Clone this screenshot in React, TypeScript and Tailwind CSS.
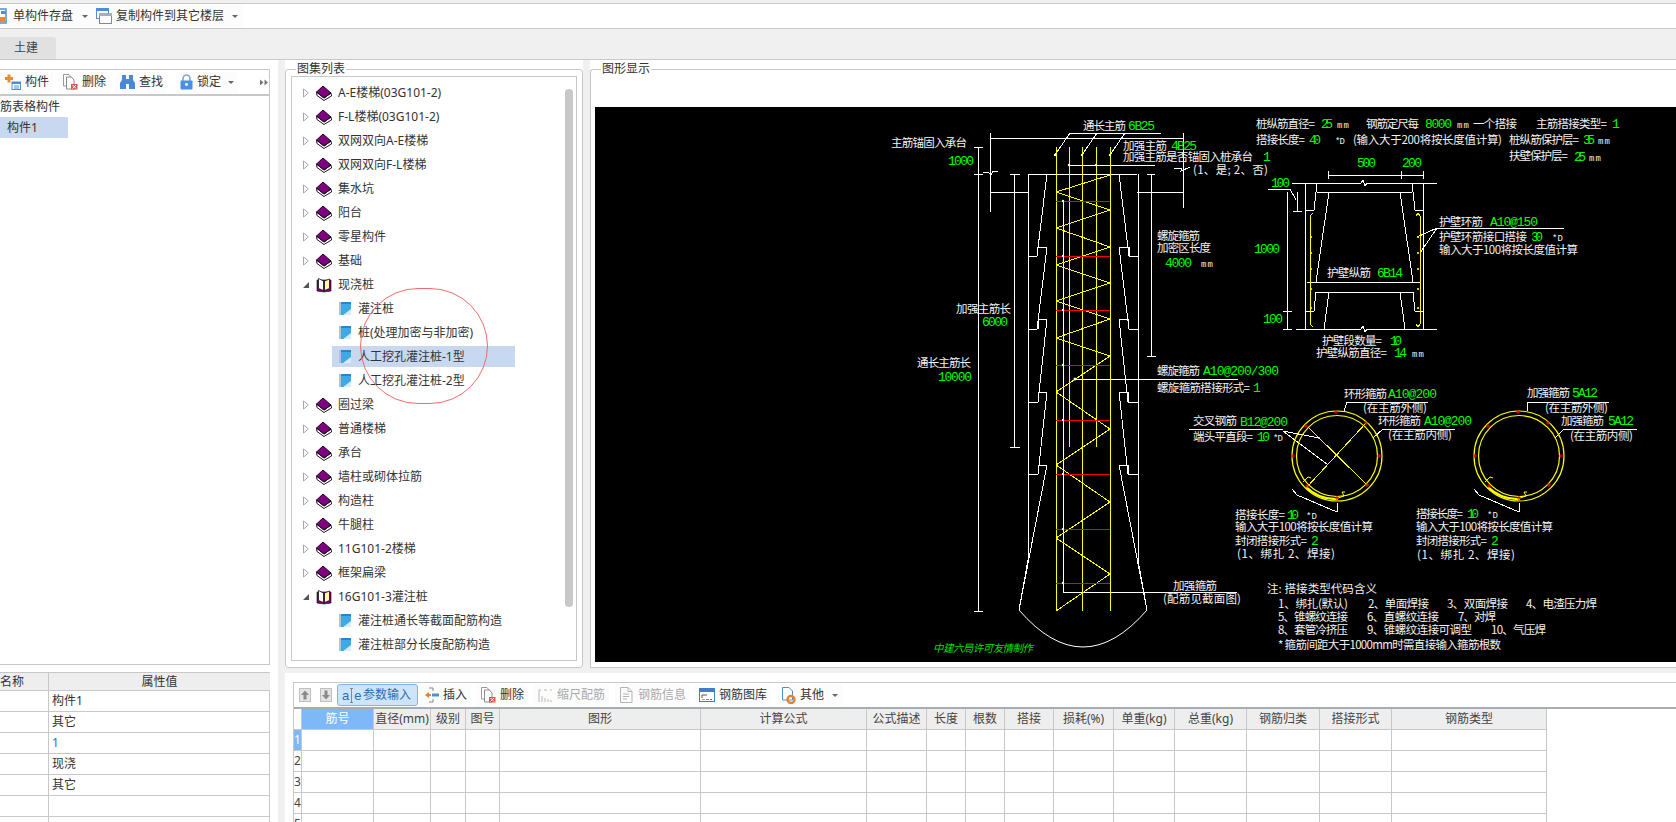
import type { ReactNode } from "react";

const sans = "font-['Noto_Sans','Noto_Sans_CJK_SC',sans-serif]";

type TreeItem = { label: string; open?: boolean; child?: boolean; selected?: boolean };

const tree: TreeItem[] = [
  { label: "A-E楼梯(03G101-2)" },
  { label: "F-L楼梯(03G101-2)" },
  { label: "双网双向A-E楼梯" },
  { label: "双网双向F-L楼梯" },
  { label: "集水坑" },
  { label: "阳台" },
  { label: "零星构件" },
  { label: "基础" },
  { label: "现浇桩", open: true },
  { label: "灌注桩", child: true },
  { label: "桩(处理加密与非加密)", child: true },
  { label: "人工挖孔灌注桩-1型", child: true, selected: true },
  { label: "人工挖孔灌注桩-2型", child: true },
  { label: "圈过梁" },
  { label: "普通楼梯" },
  { label: "承台" },
  { label: "墙柱或砌体拉筋" },
  { label: "构造柱" },
  { label: "牛腿柱" },
  { label: "11G101-2楼梯" },
  { label: "框架扁梁" },
  { label: "16G101-3灌注桩", open: true },
  { label: "灌注桩通长等截面配筋构造", child: true },
  { label: "灌注桩部分长度配筋构造", child: true },
];

const columns = ["筋号", "直径(mm)", "级别", "图号", "图形", "计算公式", "公式描述", "长度", "根数", "搭接", "损耗(%)", "单重(kg)", "总重(kg)", "钢筋归类", "搭接形式", "钢筋类型"];

const props = ["构件1", "其它", "1", "现浇", "其它", "", ""];

// cad text: x, centre y, width, text
type Label = [number, number, number, string];

const whiteLabels: Label[] = [
  [1083, 126, 43, "通长主筋"], [891, 143, 76, "主筋锚固入承台"], [1123, 146, 44, "加强主筋"], [1123, 157, 130, "加强主筋是否锚固入桩承台"],
  [1193, 170, 75, "(1、是; 2、否)"], [1157, 236, 43, "螺旋箍筋"], [1157, 248, 54, "加密区长度"], [956, 309, 55, "加强主筋长"], [917, 363, 54, "通长主筋长"],
  [1157, 371, 43, "螺旋箍筋"], [1157, 388, 93, "螺旋箍筋搭接形式="], [1193, 421, 44, "交叉钢筋"], [1193, 437, 60, "端头平直段="],
  [1173, 586, 44, "加强箍筋"], [1163, 599, 78, "(配筋见截面图)"],
  [1256, 124, 59, "桩纵筋直径="], [1366, 124, 53, "钢筋定尺每"], [1473, 124, 44, "一个搭接"], [1536, 124, 71, "主筋搭接类型="],
  [1256, 140, 49, "搭接长度="], [1353, 140, 149, "(输入大于200将按长度值计算)"], [1509, 140, 70, "桩纵筋保护层="], [1509, 156, 59, "扶壁保护层="],
  [1439, 222, 44, "护壁环筋"], [1439, 237, 88, "护壁环筋接口搭接"], [1439, 250, 139, "输入大于100将按长度值计算"], [1327, 273, 44, "护壁纵筋"],
  [1322, 341, 60, "护壁段数量="], [1316, 353, 71, "护壁纵筋直径="],
  [1344, 394, 43, "环形箍筋"], [1363, 408, 64, "(在主筋外侧)"], [1378, 421, 43, "环形箍筋"], [1388, 435, 64, "(在主筋内侧)"],
  [1235, 515, 50, "搭接长度="], [1235, 527, 138, "输入大于100将按长度值计算"], [1235, 541, 72, "封闭搭接形式="], [1237, 554, 98, "(1、绑扎  2、焊接)"],
  [1527, 393, 43, "加强箍筋"], [1545, 408, 63, "(在主筋外侧)"], [1561, 421, 43, "加强箍筋"], [1570, 436, 63, "(在主筋内侧)"],
  [1416, 514, 47, "搭接长度="], [1416, 527, 137, "输入大于100将按长度值计算"], [1416, 541, 71, "封闭搭接形式="], [1417, 555, 98, "(1、绑扎  2、焊接)"],
  [1267, 589, 110, "注: 搭接类型代码含义"],
  [1278, 604, 70, "1、绑扎(默认)"], [1368, 604, 61, "2、单面焊接"], [1447, 604, 61, "3、双面焊接"], [1526, 604, 71, "4、电渣压力焊"],
  [1278, 617, 70, "5、锥螺纹连接"], [1367, 617, 72, "6、直螺纹连接"], [1458, 617, 38, "7、对焊"],
  [1278, 630, 70, "8、套管冷挤压"], [1367, 630, 105, "9、锥螺纹连接可调型"], [1491, 630, 55, "10、气压焊"],
  [1278, 645, 223, "* 箍筋间距大于1000mm时需直接输入箍筋根数"],
];

const greenLabels: Label[] = [
  [1128, 126, 27, "6B25"], [948, 161, 26, "1000"], [1171, 146, 26, "4B25"], [1263, 157, 8, "1"], [1165, 263, 27, "4000"], [982, 322, 26, "6000"],
  [938, 377, 34, "10000"], [1203, 371, 76, "A10@200/300"], [1253, 388, 8, "1"], [1240, 422, 48, "B12@200"], [1257, 437, 13, "10"],
  [1321, 124, 12, "25"], [1425, 124, 27, "8000"], [1612, 124, 8, "1"], [1309, 140, 12, "40"], [1583, 140, 12, "35"], [1574, 157, 12, "25"],
  [1357, 163, 19, "500"], [1402, 163, 20, "200"], [1271, 183, 19, "100"], [1254, 249, 26, "1000"], [1263, 319, 20, "100"],
  [1490, 222, 48, "A10@150"], [1531, 237, 12, "30"], [1377, 273, 26, "6B14"], [1390, 341, 12, "10"], [1394, 353, 13, "14"],
  [1388, 394, 49, "A10@200"], [1424, 421, 48, "A10@200"], [1287, 515, 12, "10"], [1311, 541, 7, "2"],
  [1572, 393, 26, "5A12"], [1608, 421, 26, "5A12"], [1467, 514, 12, "10"], [1491, 541, 7, "2"],
];

const unitLabels: Label[] = [
  [1201, 263, 12, "mm"], [1337, 124, 12, "mm"], [1457, 124, 12, "mm"], [1598, 140, 12, "mm"], [1589, 157, 12, "mm"], [1412, 353, 12, "mm"],
  [1335, 140, 10, "*D"], [1552, 237, 11, "*D"], [1273, 437, 10, "*D"], [1306, 515, 11, "*D"], [1487, 514, 11, "*D"],
];

const wallLines = [
  "1047,174 1037,256 1028,256",
  "1037,256 1037,247 1047,247 1037,329 1028,329",
  "1038,329 1038,319 1047,319 1038,402 1028,402",
  "1038,402 1038,392 1047,392 1038,474 1028,474",
  "1038,474 1038,465 1047,465 1019,610",
  "1028,174 1028,560 1019,610",
];

const whiteLines = [
  "990,133 990,212", "990,138 1183,138", "1183,133 1183,208", "1070,133 1161,133", "1070,133 1055,155", "1097,133 1082,155", "1125,133 1110,155", "1068,165 1155,165",
  "978,147 978,611", "974,147 983,147", "974,174 983,174", "974,611 983,611", "1014,174 1014,447", "1010,174 1020,174", "1010,447 1020,447",
  "1028,174 1137,174", "990,192 1028,192", "1137,192 1183,192", "983,173 988,172 991,175 993,171 998,171", "1174,168 1182,168 1181,171 1190,167",
  "1151,174 1151,356", "1147,174 1155,174", "1147,356 1156,356", "1063,200 1063,592 1237,592", "1075,379 1238,379",
  // wall section
  "1328,175 1423,175", "1328,171 1328,179", "1401,171 1401,179", "1423,171 1423,179", "1292,183 1361,183 1363,180 1365,186 1367,183 1437,183", "1317,192 1412,192",
  "1305,183 1305,329", "1423,183 1423,329", "1317,183 1314,210 1305,210", "1412,183 1415,210 1423,210", "1329,192 1316,282", "1400,192 1413,282", "1307,282 1420,282",
  "1316,292 1413,292", "1316,292 1314,311 1305,311", "1413,292 1415,311 1423,311", "1329,292 1324,329", "1400,292 1405,329",
  "1296,329 1361,329 1363,326 1365,332 1367,329 1437,329", "1287,192 1287,329", "1283,311 1292,311", "1283,329 1292,329", "1297,192 1297,211", "1293,211 1302,211", "1268,189 1290,189 1296,200",
  "1437,228 1564,228", "1437,228 1417,237", "1437,228 1420,253",
  // ring leaders
  "1344,411 1347,402 1428,402", "1373,438 1383,429 1455,429", "1189,429 1283,429", "1283,431 1319,438", "1283,431 1327,464", "1292,489 1297,495 1337,512 1338,503",
  "1527,411 1528,402 1609,402", "1555,438 1564,429 1637,429", "1474,489 1479,495 1519,512 1520,503",
];

const yellowLines = [
  "1056,147 1056,611", "1069,147 1069,447", "1082,147 1082,611", "1096,147 1096,447", "1110,147 1110,611",
  "1110,175 1056,192 1110,210 1056,228 1110,247 1056,265 1110,283 1056,301 1110,319 1056,338 1110,356 1056,392 1110,429 1056,465 1110,502 1056,538 1110,574 1056,611",
  "1313,213 1310,216 1310,324 1313,327", "1416,216 1418,213 1420,216 1420,324 1418,327 1416,324",
  "1308,427 1367,485", "1366,423 1307,487",
];

const redY = [201, 256, 310, 365, 420, 474, 529, 583];
const ringMarks: [number, number][] = [[1336, 412], [1306, 426], [1293, 456], [1379, 456], [1366, 423], [1307, 486], [1337, 498], [1367, 485]];

function BookIcon() {
  return (
    <svg width="16" height="16" viewBox="0 0 16 16" className="shrink-0">
      <path d="M0.5 7 L1 10.5 L8 15.5 L15.5 11 L15 8 L8 13 Z" fill="#fff" stroke="#000" strokeWidth="0.9" />
      <path d="M0.5 7 L7 1 L15 8 L8 13 Z" fill="#800080" stroke="#000" strokeWidth="0.9" />
    </svg>
  );
}

function OpenBookIcon() {
  return (
    <svg width="16" height="16" viewBox="0 0 16 16" className="shrink-0">
      <path d="M1 3 L1 14 L8 15 L15 14 L15 3 Z" fill="#800080" stroke="#000" strokeWidth="0.6" />
      <path d="M2.5 1.5 L7.5 4 L7.5 13.5 L2.5 11.5 Z" fill="#fff" stroke="#000" strokeWidth="0.7" />
      <path d="M13.5 2 L8.5 4 L8.5 13.5 L13.5 11.5 Z" fill="#fff8b0" stroke="#000" strokeWidth="0.7" />
    </svg>
  );
}

function PageIcon() {
  return (
    <svg width="14" height="15" viewBox="0 0 14 15" className="shrink-0">
      <rect x="1" y="1" width="12" height="13" fill="#3fa9e6" />
      <rect x="1" y="1" width="2" height="13" fill="#b0c4d4" />
      <rect x="3" y="1" width="10" height="2" fill="#2a86c8" />
      <path d="M13 8 L13 14 L5 14 Z" fill="#d5ecf8" />
    </svg>
  );
}

function Arrow({ open }: { open?: boolean }) {
  return open ? (
    <svg width="8" height="8" viewBox="0 0 8 8" className="shrink-0">
      <path d="M7 1 L7 7 L1 7 Z" fill="#555" />
    </svg>
  ) : (
    <svg width="8" height="10" viewBox="0 0 8 10" className="shrink-0">
      <path d="M1.5 1 L6.5 5 L1.5 9 Z" fill="#fff" stroke="#a6a6a6" />
    </svg>
  );
}

function Caret({ className }: { className: string }) {
  return <span className={`h-0 w-0 border-x-[3px] border-t-[3px] border-x-transparent border-t-[#666] ${className}`} />;
}

function DeleteIcon() {
  return (
    <svg width="16" height="16" viewBox="0 0 16 16" className="shrink-0">
      <path d="M1.5 0.5 H7 L9 3 V12 H1.5 Z" fill="#fff" stroke="#9a9a9a" />
      <path d="M4.5 3 H9.5 L12 6 V15 H4.5 Z" fill="#fff" stroke="#8a8a8a" />
      <rect x="9" y="10" width="6.5" height="5.5" fill="#d9534f" />
      <path d="M10.5 11 L14 14.5 M14 11 L10.5 14.5" stroke="#fff" />
    </svg>
  );
}

function Tool({ icon, label, caret, disabled, className = "" }: { icon: ReactNode; label: string; caret?: string; disabled?: boolean; className?: string }) {
  return (
    <div className={`flex h-[22px] shrink-0 items-center gap-[4px] rounded-[2px] bg-[#fcfcfc] px-[4px] leading-none ${disabled ? "text-[#aaaaaa]" : "text-[#333333]"} ${className}`}>
      {icon}
      <span>{label}</span>
      {caret && <Caret className={caret} />}
    </div>
  );
}

function TopToolbar() {
  return (
    <div className="flex h-[26px] items-center overflow-hidden border-y border-[#c8c8c8] bg-white">
      <Tool
        className="-ml-[13px]"
        label="单构件存盘"
        caret="ml-[5px]"
        icon={
          <svg width="18" height="16" viewBox="0 0 18 16" className="shrink-0">
            <rect x="1" y="1" width="14" height="14" fill="#fff" stroke="#4a90d9" strokeWidth="1.5" />
            <rect x="8" y="9" width="6" height="5" fill="#e88b2e" />
            <rect x="10" y="3" width="5" height="3" fill="#4a90d9" />
          </svg>
        }
      />
      <Tool
        label="复制构件到其它楼层"
        caret="ml-[4px]"
        icon={
          <svg width="16" height="16" viewBox="0 0 16 16" className="shrink-0">
            <rect x="0.5" y="0.5" width="12" height="10" fill="#fff" stroke="#4a90d9" />
            <rect x="0" y="0" width="13" height="3" fill="#4a90d9" />
            <rect x="3.5" y="5.5" width="12" height="10" fill="#fff" stroke="#808890" />
            <rect x="3" y="5" width="13" height="3" fill="#a8aeb4" />
          </svg>
        }
      />
    </div>
  );
}

function LeftColumn() {
  return (
    <div className="flex w-[278px] shrink-0 flex-col bg-white">
      <div className="mt-[9px] h-[596px] w-[270px] shrink-0 border-y border-r border-[#c8c8c8]">
        <div className="flex h-[26px] items-center border-b-2 border-[#c8c8c8]">
          <Tool
            className="ml-[1px]"
            label="构件"
            icon={
              <svg width="16" height="16" viewBox="0 0 16 16" className="shrink-0">
                <path d="M2.5 0.5 H5.5 V3 H8 V6 H5.5 V8.5 H2.5 V6 H0 V3 H2.5 Z" fill="#ee8a2c" />
                <rect x="7" y="8" width="8.5" height="7.5" fill="#fff" stroke="#4a90d9" />
                <rect x="7" y="8" width="8.5" height="2" fill="#4a90d9" />
                <path d="M9 12 H14 M9 14 H14" stroke="#4a90d9" />
              </svg>
            }
          />
          <Tool className="ml-[5px]" label="删除" icon={<DeleteIcon />} />
          <Tool
            className="ml-[6px]"
            label="查找"
            icon={
              <svg width="15" height="16" viewBox="0 0 15 16" className="shrink-0">
                <path d="M2 1 H6 V5 H9 V1 H13 V6 L15 9 V15 H9 V10 H6 V15 H0 V9 L2 6 Z" fill="#4a8ad4" />
              </svg>
            }
          />
          <Tool
            className="ml-[9px]"
            label="锁定"
            caret="ml-[3px]"
            icon={
              <svg width="13" height="16" viewBox="0 0 13 16" className="shrink-0">
                <path d="M3 7 V4.5 A3.5 3.5 0 0 1 10 4.5 V7" fill="none" stroke="#7aa8d8" strokeWidth="1.6" />
                <rect x="0.5" y="6.5" width="12" height="9" rx="1" fill="#4a90e0" />
                <circle cx="6.5" cy="10.5" r="1.4" fill="#fff" />
              </svg>
            }
          />
          <svg width="8" height="7" viewBox="0 0 8 7" className="ml-[22px] shrink-0">
            <path d="M0 0.5 L3.5 3.5 L0 6.5 Z M4.5 0.5 L8 3.5 L4.5 6.5 Z" fill="#777777" />
          </svg>
        </div>
        <div className="flex h-[21px] items-center leading-none text-[#333333]">筋表格构件</div>
        <div className="flex h-[21px] w-[68px] items-center bg-[#c7d8f0] pl-[7px] leading-none text-[#333333]">构件1</div>
      </div>
      <div className="mt-[7px] grid w-[270px] shrink-0 grid-cols-[49px_221px] border-t border-r border-[#c8c8c8] leading-none text-[#333333]">
        <div className="flex h-[18px] items-center border-r border-b border-[#c8c8c8] bg-[#eeeeee]">名称</div>
        <div className="flex h-[18px] items-center justify-center border-b border-[#c8c8c8] bg-[#eeeeee]">属性值</div>
        {props.map((value, i) => (
          <div key={i} className="contents">
            <div className="h-[21px] border-r border-b border-[#c8c8c8]" />
            <div className={`flex h-[21px] items-center border-b border-[#c8c8c8] pl-[3px] ${value === "1" ? "text-[#2a6fb5]" : ""}`}>{value}</div>
          </div>
        ))}
      </div>
    </div>
  );
}

function TreeRow({ item }: { item: TreeItem }) {
  if (item.child) {
    return (
      <div className={`ml-[40px] flex h-[21px] w-[183px] items-center gap-[6px] pl-[6px] ${item.selected ? "bg-[#c7d8f0]" : ""}`}>
        <PageIcon />
        <span>{item.label}</span>
      </div>
    );
  }
  return (
    <div className="flex h-[21px] items-center pl-[10px]">
      <span className="flex w-[14px] shrink-0 items-center">
        <Arrow open={item.open} />
      </span>
      <span className="mr-[6px]">{item.open ? <OpenBookIcon /> : <BookIcon />}</span>
      <span>{item.label}</span>
    </div>
  );
}

function AtlasPanel() {
  return (
    <div className="w-[298px] shrink-0 bg-white pt-[9px]">
      <div className="relative h-[599px] rounded-[3px] border border-[#c8c8c8] px-[5px] pt-[6px] pb-[6px]">
        <span className="absolute -top-[8px] left-[10px] bg-white px-px leading-[14px] text-[#333333]">图集列表</span>
        <div className="relative flex h-full border border-[#c8c8c8] bg-white">
          <div className="flex flex-1 flex-col gap-[3px] pt-[5px] leading-none text-[#333333]">
            {tree.map((item) => (
              <TreeRow key={item.label} item={item} />
            ))}
          </div>
          <div className="mt-[12px] mr-[3px] h-[518px] w-[8px] rounded-[4px] bg-[#c8c8c8]" />
          <div className="absolute top-[211px] left-[68px] h-[116px] w-[128px] rounded-full border border-[#f26a6e]" />
        </div>
      </div>
    </div>
  );
}

function CadLabel({ label, className }: { label: Label; className: string }) {
  return (
    <text x={label[0]} y={label[1] + 4} textLength={label[2]} lengthAdjust="spacing" className={className}>
      {label[3]}
    </text>
  );
}

function Ring({ dx, cross }: { dx: number; cross?: boolean }) {
  return (
    <g transform={`translate(${dx} 0)`} fill="none">
      <circle cx="1337" cy="456" r="45" stroke="#ffff00" strokeWidth="1.2" />
      <circle cx="1337" cy="456" r="40.5" stroke="#ffff00" strokeWidth="1.2" />
      <path d="M1306 487 A43 43 0 0 0 1338 499" stroke="#ffff00" strokeWidth="2.2" />
      <path d="M1303 482 l5 -5 l3 1 M1338 498 l6 -2 l-2 -4 l3 0" stroke="#ffff00" />
      {ringMarks.map(([x, y]) => (
        <path key={`${x}-${y}`} d={`M${x - 2} ${y} h4 M${x} ${y - 2} v4`} stroke="#ff0000" />
      ))}
      {cross && <circle cx="1319" cy="438" r="1" fill="#fff" />}
    </g>
  );
}

function Drawing() {
  return (
    <svg width="1081" height="555" viewBox="595 107 1081 555" className="block">
      <g fill="none" stroke="#ffffff" shapeRendering="crispEdges">
        {whiteLines.map((p) => (
          <polyline key={p} points={p} />
        ))}
        {wallLines.map((p) => (
          <polyline key={p} points={p} />
        ))}
        <g transform="translate(2166 0) scale(-1 1)">
          {wallLines.map((p) => (
            <polyline key={p} points={p} />
          ))}
        </g>
        <path d="M1019 610 Q1083 684 1147 610" shapeRendering="auto" />
      </g>
      <g fill="none" stroke="#ffff00" shapeRendering="crispEdges">
        {yellowLines.map((p) => (
          <polyline key={p} points={p} />
        ))}
      </g>
      <g stroke="#ff0000" shapeRendering="crispEdges">
        {redY.map((y) => (
          <line key={y} x1="1056" y1={y} x2="1110" y2={y} />
        ))}
      </g>
      <g fill="#ffffff">
        {redY.map((y) => (
          <circle key={y} cx="1063" cy={y} r="1.2" />
        ))}
        {[1055, 1082, 1110, 1069, 1096].map((x) => (
          <circle key={x} cx={x} cy={x === 1069 || x === 1096 ? 165 : 155} r="1.2" />
        ))}
        <circle cx="1075" cy="379" r="1.5" />
      </g>
      <g fill="#ffff00">
        {[1310, 1420].flatMap((x) =>
          [237, 253, 269, 289, 308].map((y) => <circle key={`${x}-${y}`} cx={x + (x === 1310 ? 1 : -2)} cy={y} r="1.1" />),
        )}
      </g>
      <Ring dx={0} cross />
      <Ring dx={182} />
      <g>
        {whiteLabels.map((l) => (
          <CadLabel key={`${l[0]}-${l[1]}`} label={l} className="fill-[#f2f2f2] font-['Noto_Sans_CJK_SC',sans-serif] text-[11.5px]" />
        ))}
        {greenLabels.map((l) => (
          <CadLabel key={`${l[0]}-${l[1]}`} label={l} className="fill-[#00ff00] font-['Liberation_Mono',monospace] text-[13px]" />
        ))}
        {unitLabels.map((l) => (
          <CadLabel key={`${l[0]}-${l[1]}`} label={l} className="fill-[#f2f2f2] font-['Liberation_Mono',monospace] text-[9px]" />
        ))}
        <text x="933" y="652" textLength="100" lengthAdjust="spacing" className="fill-[#00e000] font-['Noto_Sans_CJK_SC',sans-serif] text-[10.5px] italic">
          中建六局许可友情制作
        </text>
      </g>
    </svg>
  );
}

function GraphicPanel() {
  return (
    <div className="min-w-0 flex-1 bg-white pt-[9px]">
      <div className="relative h-[599px] rounded-tl-[3px] border-t border-b border-l border-[#c8c8c8] pt-[37px] pl-[4px]">
        <span className="absolute -top-[8px] left-[10px] bg-white px-px leading-[14px] text-[#333333]">图形显示</span>
        <div className="h-[555px] bg-black">
          <Drawing />
        </div>
      </div>
    </div>
  );
}

function ArrowBox({ up, className }: { up?: boolean; className: string }) {
  return (
    <svg width="12" height="14" viewBox="0 0 12 14" className={`shrink-0 ${className}`}>
      <rect x="0.5" y="0.5" width="11" height="13" fill="#e4e4e4" stroke="#c0c0c0" />
      <path d={up ? "M6 2.5 L10 7 H7.5 V11.5 H4.5 V7 H2 Z" : "M6 11.5 L10 7 H7.5 V2.5 H4.5 V7 H2 Z"} fill="#8a8a8a" />
    </svg>
  );
}

function BottomToolbar() {
  return (
    <div className="flex h-[26px] items-center border-b-2 border-[#a8acb0] text-[#333333]">
      <ArrowBox up className="ml-[5px]" />
      <ArrowBox className="ml-[9px]" />
      <div className="ml-[5px] flex h-[22px] w-[81px] shrink-0 items-center rounded-[3px] border border-[#7eb4ea] bg-[#cde4fa] pl-[4px] leading-none text-[#2a6fb5]">
        <span className="flex w-[21px] items-center font-['Liberation_Sans',sans-serif] text-[13px]">
          a
          <svg width="3" height="15" viewBox="0 0 3 15" className="mx-px shrink-0">
            <path d="M0 0.5 H3 M1.5 0.5 V14.5 M0 14.5 H3" fill="none" stroke="#7d8894" />
          </svg>
          e
        </span>
        <span>参数输入</span>
      </div>
      <Tool
        className="ml-[3px]"
        label="插入"
        icon={
          <svg width="14" height="16" viewBox="0 0 14 16" className="shrink-0">
            <path d="M4 1 H8 V4 M4 15 H8 V12" fill="none" stroke="#808890" />
            <path d="M0 8 L4 5 V7 H6 V9 H4 V11 Z" fill="#e8822a" />
            <rect x="7" y="6.5" width="7" height="3" fill="#4a90d9" />
          </svg>
        }
      />
      <Tool className="ml-[5px]" label="删除" icon={<DeleteIcon />} />
      <Tool
        className="ml-[6px]"
        label="缩尺配筋"
        disabled
        icon={
          <svg width="15" height="15" viewBox="0 0 15 15" className="shrink-0">
            <path d="M1 2 V14 M4 8 V14 M7 10 V14 M10 11 V14 M13 12 V14 M1 2 H3 M6 2 H9 M12 2 H14" stroke="#b8b8b8" fill="none" />
          </svg>
        }
      />
      <Tool
        className="ml-[6px]"
        label="钢筋信息"
        disabled
        icon={
          <svg width="15" height="16" viewBox="0 0 15 16" className="shrink-0">
            <path d="M1.5 0.5 H9 L13 4.5 V15.5 H1.5 Z M9 0.5 V4.5 H13 M4 7 H10 M4 9.5 H10 M4 12 H8" stroke="#b4b4b4" fill="none" />
          </svg>
        }
      />
      <Tool
        className="ml-[5px]"
        label="钢筋图库"
        icon={
          <svg width="16" height="14" viewBox="0 0 16 14" className="shrink-0">
            <rect x="0.5" y="0.5" width="15" height="13" fill="#fff" stroke="#3f7fc8" />
            <rect x="0" y="0" width="16" height="4" fill="#3f7fc8" />
            <path d="M3 7 H8 M3 7 V10" stroke="#555" />
            <path d="M3 11.5 H6" stroke="#e0a030" />
            <path d="M7 11.5 H10" stroke="#60b060" />
            <path d="M11 11.5 H13" stroke="#d05050" />
          </svg>
        }
      />
      <Tool
        className="ml-[6px]"
        label="其他"
        caret="ml-[4px]"
        icon={
          <svg width="15" height="17" viewBox="0 0 15 17" className="shrink-0">
            <path d="M1.5 0.5 H8 L11.5 4 V13 H1.5 Z" fill="#fff" stroke="#4a90d9" />
            <circle cx="10" cy="12.5" r="3.5" fill="none" stroke="#e8822a" strokeWidth="2.4" />
          </svg>
        }
      />
    </div>
  );
}

function RebarTable() {
  const cell = "border-r border-b border-[#c8c8c8]";
  return (
    <div className="grid w-[1253px] grid-cols-[8px_72px_57px_35px_34px_201px_166px_60px_39px_39px_49px_60px_61px_72px_73px_72px_155px] leading-none">
      <div className={`h-[21px] ${cell}`} />
      {columns.map((name, i) => (
        <div
          key={name}
          className={`flex h-[21px] items-center justify-center whitespace-nowrap ${cell} ${i === 0 ? "bg-[#7eb8f7] text-white" : "bg-[#eeeeee] text-[#444444]"}`}
        >
          {name}
        </div>
      ))}
      {[1, 2, 3, 4, 5].map((row) => (
        <div key={row} className="contents">
          <div className={`flex h-[21px] items-center overflow-hidden ${cell} ${row === 1 ? "bg-[#7eb8f7] text-white" : "text-[#444444]"}`}>{row}</div>
          {columns.map((name) => (
            <div key={name} className={`h-[21px] ${cell}`} />
          ))}
        </div>
      ))}
    </div>
  );
}

export default function App() {
  return (
    <div className={`flex h-[822px] w-[1676px] flex-col overflow-hidden bg-[#f0f0f0] text-[12px] ${sans}`}>
      <div className="h-[3px] shrink-0" />
      <TopToolbar />
      <div className="flex h-[31px] shrink-0 items-end border-b border-[#c8c8c8]">
        <div className="flex h-[22px] w-[56px] items-center rounded-tr-[3px] bg-[#e1e1e1] pl-[14px] leading-none text-[#444444]">土建</div>
      </div>
      <div className="flex min-h-0 flex-1">
        <LeftColumn />
        <div className="ml-[7px] flex min-w-0 flex-1 flex-col">
          <div className="flex h-[608px] shrink-0 gap-[7px]">
            <AtlasPanel />
            <GraphicPanel />
          </div>
          <div className="mt-[5px] min-h-0 flex-1 bg-white pt-[9px] pl-[8px]">
            <div className="h-full border-t border-l border-[#c8c8c8]">
              <BottomToolbar />
              <RebarTable />
            </div>
          </div>
        </div>
      </div>
    </div>
  );
}
